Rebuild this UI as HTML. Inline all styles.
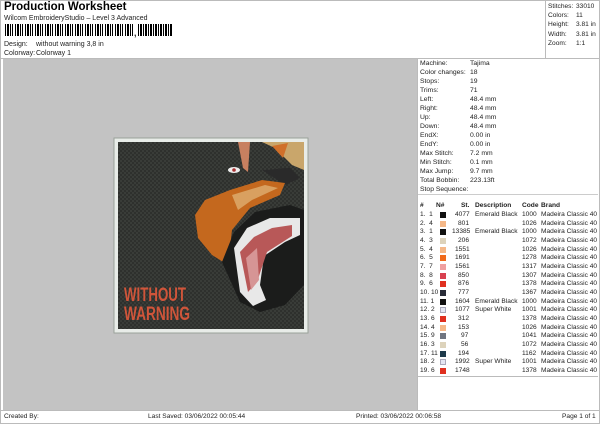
<!DOCTYPE html>
<html><head><meta charset="utf-8"><style>
*{margin:0;padding:0;box-sizing:border-box}
body{width:600px;height:424px;background:#fff;font-family:"Liberation Sans",sans-serif;color:#222;position:relative;overflow:hidden;font-size:7px}
.a{position:absolute;white-space:nowrap}
.r{position:absolute;left:420px;font-size:6.6px;white-space:nowrap}
.r span{position:absolute}
.sw{position:absolute;width:6px;height:6px;top:1px;left:20px}
</style></head><body>
<div class="a" style="left:0;top:0;width:600px;height:424px;border:1px solid #bbb"></div>
<div class="a" style="left:4px;top:1px;font-size:11.5px;font-weight:bold;color:#000">Production Worksheet</div>
<div class="a" style="left:4px;top:15px;font-size:7px">Wilcom EmbroideryStudio – Level 3 Advanced</div>
<div class="a" style="left:5px;top:24px;width:128px;height:12px;background:repeating-linear-gradient(90deg,#000 0 1px,#fff 1px 2px,#000 2px 4px,#fff 4px 5px,#000 5px 6px,#fff 6px 7px,#000 7px 8px,#fff 8px 10px)"></div>
<div class="a" style="left:134px;top:28px;font-size:9px;font-weight:bold">,</div>
<div class="a" style="left:138px;top:24px;width:34px;height:12px;background:repeating-linear-gradient(90deg,#000 0 1px,#fff 1px 2px,#000 2px 4px,#fff 4px 5px)"></div>
<div class="a" style="left:4px;top:41px">Design:</div><div class="a" style="left:36px;top:41px">without warning 3,8 in</div>
<div class="a" style="left:4px;top:50px">Colorway:</div><div class="a" style="left:36px;top:50px">Colorway 1</div>
<div class="a" style="left:0;top:58px;width:600px;border-top:1px solid #bbb"></div>
<div class="a" style="left:545px;top:0;height:59px;border-left:1px solid #bbb"></div>
<div class="a" style="left:548px;top:2px;line-height:9.2px;font-size:6.6px">Stitches:<br>Colors:<br>Height:<br>Width:<br>Zoom:</div>
<div class="a" style="left:576px;top:2px;line-height:9.2px;font-size:6.6px">33010<br>11<br>3.81 in<br>3.81 in<br>1:1</div>
<div class="a" style="left:3px;top:59px;width:414px;height:351px;background:#c3c3c3"></div>
<svg class="a" style="left:0;top:0" width="600" height="424">
<defs><pattern id="t" width="4" height="4" patternUnits="userSpaceOnUse"><rect width="4" height="4" fill="#2e302d"/><path d="M0 1h2M2 3h2" stroke="#444743" stroke-width="1"/></pattern></defs>
<rect x="114" y="138" width="194" height="195" fill="#e8ece8" stroke="#9aa29a"/>
<rect x="118" y="142" width="186" height="187" fill="url(#t)"/>
<path d="M262 142 L304 142 L304 170 L292 165 L275 148 Z" fill="#c9a66b"/>
<path d="M238 142 L250 142 L248 172 L243 168 Z" fill="#c88060"/>
<path d="M272 146 L288 143 L283 158 Z" fill="#d0702a"/>
<path d="M262 170 L290 168 L300 178 L285 185 Z" fill="#2a2a2a"/>
<path d="M195 215 L205 200 L230 190 L262 180 L285 183 L280 195 L250 208 L232 230 L228 265 L212 255 L198 238 Z" fill="#c4681e"/>
<path d="M232 195 L265 185 L278 188 L252 200 L238 210 Z" fill="#d9a060"/>
<path d="M222 262 L234 232 L255 212 L290 205 L304 210 L304 285 L285 305 L260 312 L240 302 Z" fill="#1b1c1b"/>
<path d="M234 248 L247 228 L270 218 L300 218 L300 235 L285 242 L264 256 L260 285 L266 300 L253 306 L240 292 Z" fill="#e8e8e8"/>
<path d="M240 252 L254 237 L272 228 L292 225 L292 236 L267 252 L257 282 L248 292 Z" fill="#b85858"/>
<path d="M246 258 L257 248 L259 280 L251 290 Z" fill="#d69595"/>
<ellipse cx="234" cy="170" rx="6" ry="3" fill="#eee"/><circle cx="234" cy="170" r="1.8" fill="#a33"/>
<text x="124" y="301" font-family="Liberation Sans" font-weight="bold" font-size="19" fill="#d0553a" textLength="62" lengthAdjust="spacingAndGlyphs">WITHOUT</text>
<text x="124" y="320" font-family="Liberation Sans" font-weight="bold" font-size="19" fill="#d0553a" textLength="66" lengthAdjust="spacingAndGlyphs">WARNING</text>
</svg>
<div class="a" style="left:417px;top:59px;height:351px;border-left:1px solid #bbb"></div>
<div class="a" style="left:420px;top:59px;line-height:9px;font-size:6.8px">Machine:<br>Color changes:<br>Stops:<br>Trims:<br>Left:<br>Right:<br>Up:<br>Down:<br>EndX:<br>EndY:<br>Max Stitch:<br>Min Stitch:<br>Max Jump:<br>Total Bobbin:<br>Stop Sequence:</div>
<div class="a" style="left:470px;top:59px;line-height:9px;font-size:6.8px">Tajima<br>18<br>19<br>71<br>48.4 mm<br>48.4 mm<br>48.4 mm<br>48.4 mm<br>0.00 in<br>0.00 in<br>7.2 mm<br>0.1 mm<br>9.7 mm<br>223.13ft</div>
<div class="a" style="left:418px;top:194px;width:180px;border-top:1px solid #ccc"></div>
<div class="a" style="left:418px;top:376px;width:180px;border-top:1px solid #bbb"></div>
<div class="a" style="left:0;top:410px;width:600px;border-top:1px solid #bbb"></div>
<div class="a" style="left:4px;top:413px;font-size:6.6px">Created By:</div>
<div class="a" style="left:148px;top:413px;font-size:6.6px">Last Saved: 03/06/2022 00:05:44</div>
<div class="a" style="left:356px;top:413px;font-size:6.6px">Printed: 03/06/2022 00:06:58</div>
<div class="a" style="left:562px;top:413px;font-size:6.6px">Page 1 of 1</div>
<div class="r" style="top:202px;font-weight:bold;text-decoration:underline"><span style="left:0">#</span><span style="left:16px">N#</span><span style="left:41px">St.</span><span style="left:55px">Description</span><span style="left:102px">Code</span><span style="left:121px">Brand</span></div>
<div class="r" style="top:211px"><span style="left:0">1.&nbsp; 1</span><i class="sw" style="background:#111"></i><span style="left:35px">4077</span><span style="left:55px">Emerald Black</span><span style="left:102px">1000</span><span style="left:121px">Madeira Classic 40</span></div>
<div class="r" style="top:220px"><span style="left:0">2.&nbsp; 4</span><i class="sw" style="background:#f5b888"></i><span style="left:38px">801</span><span style="left:102px">1026</span><span style="left:121px">Madeira Classic 40</span></div>
<div class="r" style="top:228px"><span style="left:0">3.&nbsp; 1</span><i class="sw" style="background:#111"></i><span style="left:32px">13385</span><span style="left:55px">Emerald Black</span><span style="left:102px">1000</span><span style="left:121px">Madeira Classic 40</span></div>
<div class="r" style="top:237px"><span style="left:0">4.&nbsp; 3</span><i class="sw" style="background:#ddd3bb"></i><span style="left:38px">206</span><span style="left:102px">1072</span><span style="left:121px">Madeira Classic 40</span></div>
<div class="r" style="top:246px"><span style="left:0">5.&nbsp; 4</span><i class="sw" style="background:#f5b888"></i><span style="left:35px">1551</span><span style="left:102px">1026</span><span style="left:121px">Madeira Classic 40</span></div>
<div class="r" style="top:254px"><span style="left:0">6.&nbsp; 5</span><i class="sw" style="background:#f06a1a"></i><span style="left:35px">1691</span><span style="left:102px">1278</span><span style="left:121px">Madeira Classic 40</span></div>
<div class="r" style="top:263px"><span style="left:0">7.&nbsp; 7</span><i class="sw" style="background:#f0a0a0"></i><span style="left:35px">1561</span><span style="left:102px">1317</span><span style="left:121px">Madeira Classic 40</span></div>
<div class="r" style="top:272px"><span style="left:0">8.&nbsp; 8</span><i class="sw" style="background:#d84050"></i><span style="left:38px">850</span><span style="left:102px">1307</span><span style="left:121px">Madeira Classic 40</span></div>
<div class="r" style="top:280px"><span style="left:0">9.&nbsp; 6</span><i class="sw" style="background:#e03020"></i><span style="left:38px">876</span><span style="left:102px">1378</span><span style="left:121px">Madeira Classic 40</span></div>
<div class="r" style="top:289px"><span style="left:0">10. 10</span><i class="sw" style="background:#2a2d38"></i><span style="left:38px">777</span><span style="left:102px">1367</span><span style="left:121px">Madeira Classic 40</span></div>
<div class="r" style="top:298px"><span style="left:0">11. 1</span><i class="sw" style="background:#111"></i><span style="left:35px">1604</span><span style="left:55px">Emerald Black</span><span style="left:102px">1000</span><span style="left:121px">Madeira Classic 40</span></div>
<div class="r" style="top:306px"><span style="left:0">12. 2</span><i class="sw" style="background:#e4e6f2;border:1px solid #aab"></i><span style="left:35px">1077</span><span style="left:55px">Super White</span><span style="left:102px">1001</span><span style="left:121px">Madeira Classic 40</span></div>
<div class="r" style="top:315px"><span style="left:0">13. 6</span><i class="sw" style="background:#e03020"></i><span style="left:38px">312</span><span style="left:102px">1378</span><span style="left:121px">Madeira Classic 40</span></div>
<div class="r" style="top:324px"><span style="left:0">14. 4</span><i class="sw" style="background:#f5b888"></i><span style="left:38px">153</span><span style="left:102px">1026</span><span style="left:121px">Madeira Classic 40</span></div>
<div class="r" style="top:332px"><span style="left:0">15. 9</span><i class="sw" style="background:#707580"></i><span style="left:41px">97</span><span style="left:102px">1041</span><span style="left:121px">Madeira Classic 40</span></div>
<div class="r" style="top:341px"><span style="left:0">16. 3</span><i class="sw" style="background:#ddd3bb"></i><span style="left:41px">56</span><span style="left:102px">1072</span><span style="left:121px">Madeira Classic 40</span></div>
<div class="r" style="top:350px"><span style="left:0">17. 11</span><i class="sw" style="background:#1d3a4a"></i><span style="left:38px">194</span><span style="left:102px">1162</span><span style="left:121px">Madeira Classic 40</span></div>
<div class="r" style="top:358px"><span style="left:0">18. 2</span><i class="sw" style="background:#e4e6f2;border:1px solid #aab"></i><span style="left:35px">1992</span><span style="left:55px">Super White</span><span style="left:102px">1001</span><span style="left:121px">Madeira Classic 40</span></div>
<div class="r" style="top:367px"><span style="left:0">19. 6</span><i class="sw" style="background:#e03020"></i><span style="left:35px">1748</span><span style="left:102px">1378</span><span style="left:121px">Madeira Classic 40</span></div>
</body></html>
